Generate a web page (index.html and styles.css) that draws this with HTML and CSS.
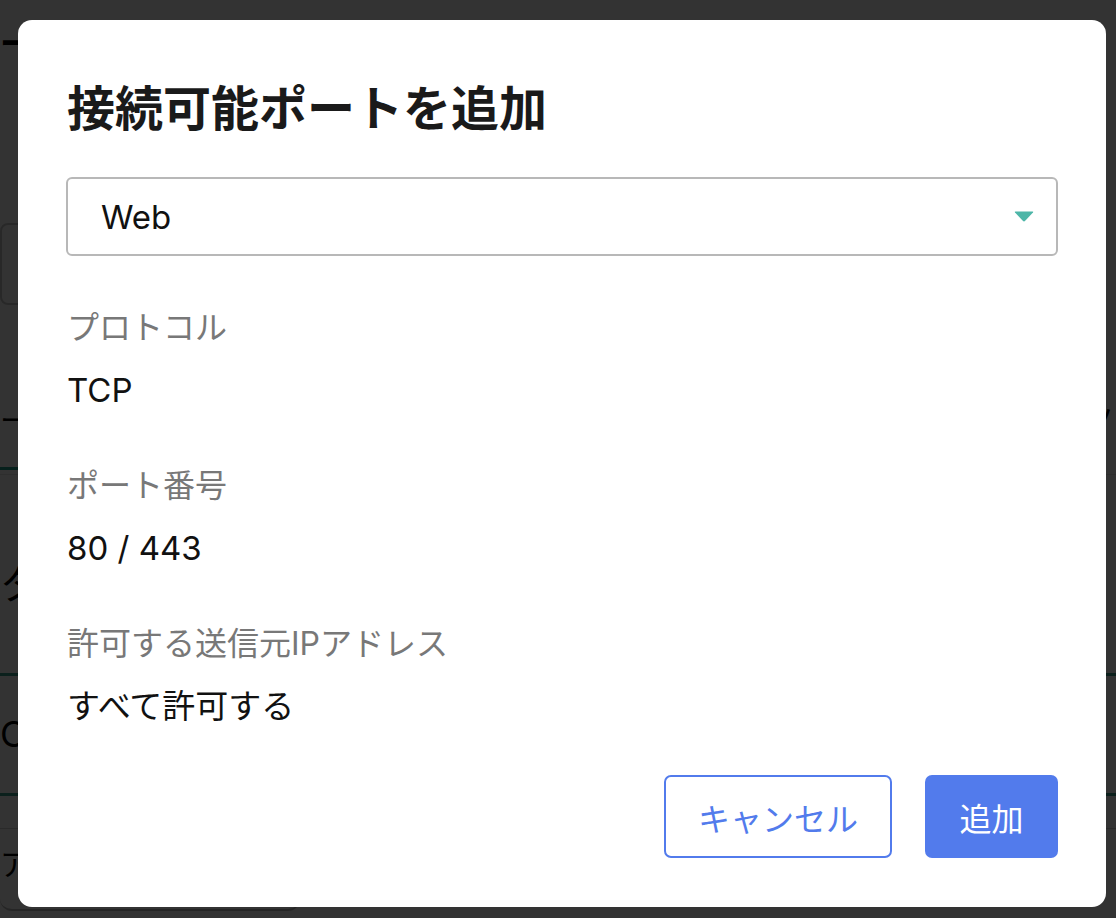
FILE: index.html
```html
<!DOCTYPE html>
<html lang="ja">
<head>
<meta charset="utf-8">
<title>接続可能ポートを追加</title>
<link rel="stylesheet" href="styles.css">
</head>
<body>
<div class="page">
  <div class="bg-title">ーー</div>
  <div class="bg-input"></div>
  <div class="bg-tabs">
    <span class="bg-tab active">ー</span>
    <span class="bg-tab">ノ</span>
  </div>
  <div class="bg-h2">タ</div>
  <div class="bg-rule"></div>
  <div class="bg-cell">CI</div>
  <div class="bg-rule"></div>
  <div class="bg-sub"></div>
  <div class="bg-box">アー</div>
</div>
<div class="overlay"></div>
<div class="modal">
  <h1 class="modal-title">接続可能ポートを追加</h1>
  <div class="select">
    <span class="select-value">Web</span>
    <svg class="select-arrow" width="20" height="11" viewBox="0 0 20 11"><path d="M1.5 0.5 H18.5 Q19.8 0.5 19 1.6 L11.2 9.8 Q10 11 8.8 9.8 L1 1.6 Q0.2 0.5 1.5 0.5 Z" fill="#4db6a8"/></svg>
  </div>
  <div class="field">
    <div class="field-label">プロトコル</div>
    <div class="field-value">TCP</div>
  </div>
  <div class="field">
    <div class="field-label">ポート番号</div>
    <div class="field-value">80 / 443</div>
  </div>
  <div class="field">
    <div class="field-label">許可する送信元IPアドレス</div>
    <div class="field-value">すべて許可する</div>
  </div>
  <div class="actions">
    <button class="btn btn-outline">キャンセル</button>
    <button class="btn btn-primary">追加</button>
  </div>
</div>
</body>
</html>
```

FILE: styles.css
```css
* { box-sizing: border-box; }
html, body {
  margin: 0;
  height: 918px;
  overflow: hidden;
  background: #fff;
  font-family: Inter, "Noto Sans CJK JP", sans-serif;
  color: #1a1a1a;
}

/* background page (dimmed) */
.page {
  width: 100%;
}
.bg-title {
  padding-top: 28px;
  height: 60px;
  font-size: 32px;
  font-weight: 700;
  line-height: 32px;
  color: #000;
}
.bg-input {
  width: 500px;
  margin-top: 163px;
  height: 82px;
  border: 2px solid #c8c8c8;
  border-radius: 8px;
}
.bg-tabs {
  margin-top: 95px;
  height: 75px;
  display: flex;
  justify-content: space-between;
  border-bottom: 1px solid #e6e6e6;
}
.bg-tab {
  height: 70px;
  font-size: 30px;
  line-height: 40px;
  color: #000;
}
.bg-tab.active {
  width: 40px;
  border-bottom: 3px solid #1f9e8c;
}
.bg-h2 {
  margin-top: 85px;
  height: 113px;
  font-size: 40px;
  line-height: 50px;
  color: #000;
}
.bg-rule {
  height: 3px;
  background: #3a9e8e;
}
.bg-cell {
  height: 117px;
  font-size: 36px;
  line-height: 117px;
  color: #000;
}
.bg-sub {
  height: 33px;
  border-bottom: 1px solid #d0d0d0;
}
.bg-box {
  width: 300px;
  height: 82px;
  border-bottom: 2px solid #bbb;
  border-radius: 0 0 12px 12px;
  font-size: 30px;
  line-height: 70px;
  color: #000;
}

.overlay {
  position: fixed;
  inset: 0;
  background: rgba(0, 0, 0, 0.8);
}

/* modal */
.modal {
  position: absolute;
  left: 18px;
  top: 20px;
  width: 1088px;
  height: 887px;
  background: #fff;
  border-radius: 14px;
  padding: 57px 48px 49px;
  display: flex;
  flex-direction: column;
}
.modal-title {
  margin: 0;
  font-size: 48px;
  line-height: 64px;
  font-weight: 700;
  color: #1a1a1a;
  padding-left: 1px;
}
.select {
  margin-top: 36px;
  height: 79px;
  border: 2px solid #b8b8b8;
  border-radius: 6px;
  display: flex;
  align-items: center;
  justify-content: space-between;
  padding: 0 22px 0 33px;
}
.select-value {
  font-size: 33px;
  color: #111;
}
.select-arrow { display: block; }

.field { margin-top: 48px; padding-left: 1px; }
.field-label {
  font-size: 32px;
  line-height: 48px;
  color: #787878;
}
.field-value {
  margin-top: 14px;
  font-size: 33px;
  line-height: 48px;
  color: #111;
}

.actions {
  margin-top: 45px;
  display: flex;
  justify-content: flex-end;
  gap: 33px;
}
.btn {
  height: 83px;
  border-radius: 7px;
  font-family: Inter, "Noto Sans CJK JP", sans-serif;
  font-size: 32px;
  cursor: pointer;
}
.btn-outline {
  width: 228px;
  background: #fff;
  border: 2px solid #527bec;
  color: #527bec;
}
.btn-primary {
  width: 133px;
  background: #527bec;
  border: none;
  color: #fff;
}
```
